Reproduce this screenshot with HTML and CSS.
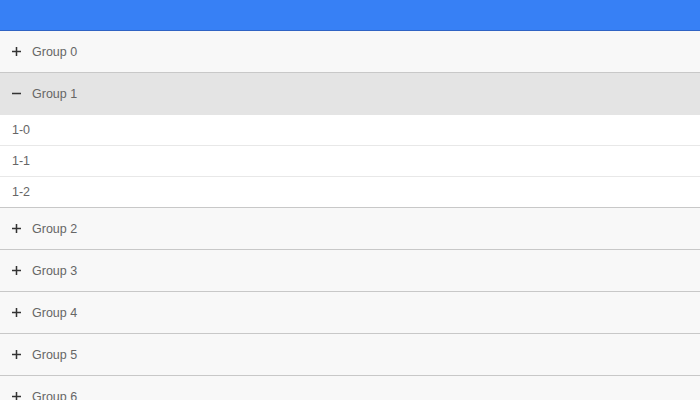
FILE: index.html
```html
<!DOCTYPE html>
<html>
<head>
<meta charset="utf-8">
<link rel="stylesheet" href="styles.css">
</head>
<body>
<div class="app">
  <div class="topbar"></div>
  <div class="list">
    <div class="group">
      <div class="group-head">
        <svg class="ico" viewBox="0 0 10 10"><path d="M0 5H10M5 0V10"/></svg>
        <span>Group 0</span>
      </div>
    </div>
    <div class="group open">
      <div class="group-head">
        <svg class="ico" viewBox="0 0 10 10"><path d="M0 5H10"/></svg>
        <span>Group 1</span>
      </div>
      <div class="items">
        <div class="item">1-0</div>
        <div class="item">1-1</div>
        <div class="item">1-2</div>
      </div>
    </div>
    <div class="group">
      <div class="group-head">
        <svg class="ico" viewBox="0 0 10 10"><path d="M0 5H10M5 0V10"/></svg>
        <span>Group 2</span>
      </div>
    </div>
    <div class="group">
      <div class="group-head">
        <svg class="ico" viewBox="0 0 10 10"><path d="M0 5H10M5 0V10"/></svg>
        <span>Group 3</span>
      </div>
    </div>
    <div class="group">
      <div class="group-head">
        <svg class="ico" viewBox="0 0 10 10"><path d="M0 5H10M5 0V10"/></svg>
        <span>Group 4</span>
      </div>
    </div>
    <div class="group">
      <div class="group-head">
        <svg class="ico" viewBox="0 0 10 10"><path d="M0 5H10M5 0V10"/></svg>
        <span>Group 5</span>
      </div>
    </div>
    <div class="group">
      <div class="group-head">
        <svg class="ico" viewBox="0 0 10 10"><path d="M0 5H10M5 0V10"/></svg>
        <span>Group 6</span>
      </div>
    </div>
  </div>
</div>
</body>
</html>
```
FILE: styles.css
```css
html, body {
  margin: 0;
  padding: 0;
  background: #ffffff;
}
body {
  font-family: "Liberation Sans", Arial, sans-serif;
  font-size: 12.5px;
  color: #666666;
}
.app {
  display: flex;
  flex-direction: column;
  height: 400px;
  overflow: hidden;
}
.topbar {
  height: 30px;
  background: #3780f5;
  border-bottom: 1px solid #2f63c4;
  flex: none;
}
.list {
  display: flex;
  flex-direction: column;
}
.group-head {
  height: 41px;
  display: flex;
  align-items: center;
  gap: 11px;
  padding-left: 12px;
  background: #f8f8f8;
  border-bottom: 1px solid #c8c8c8;
  color: #666666;
  flex: none;
}
.group.open .group-head {
  background: #e4e4e4;
  border-bottom-color: #e4e4e4;
}
.ico {
  width: 9px;
  height: 9px;
  stroke: #333333;
  stroke-width: 1.7;
  fill: none;
  flex: none;
}
.items {
  display: flex;
  flex-direction: column;
  background: #ffffff;
  border-bottom: 1px solid #c8c8c8;
}
.item {
  height: 30px;
  display: flex;
  align-items: center;
  padding-left: 12px;
  border-top: 1px solid #e8e8e8;
  color: #666666;
}
.item:first-child {
  border-top: none;
}
```
